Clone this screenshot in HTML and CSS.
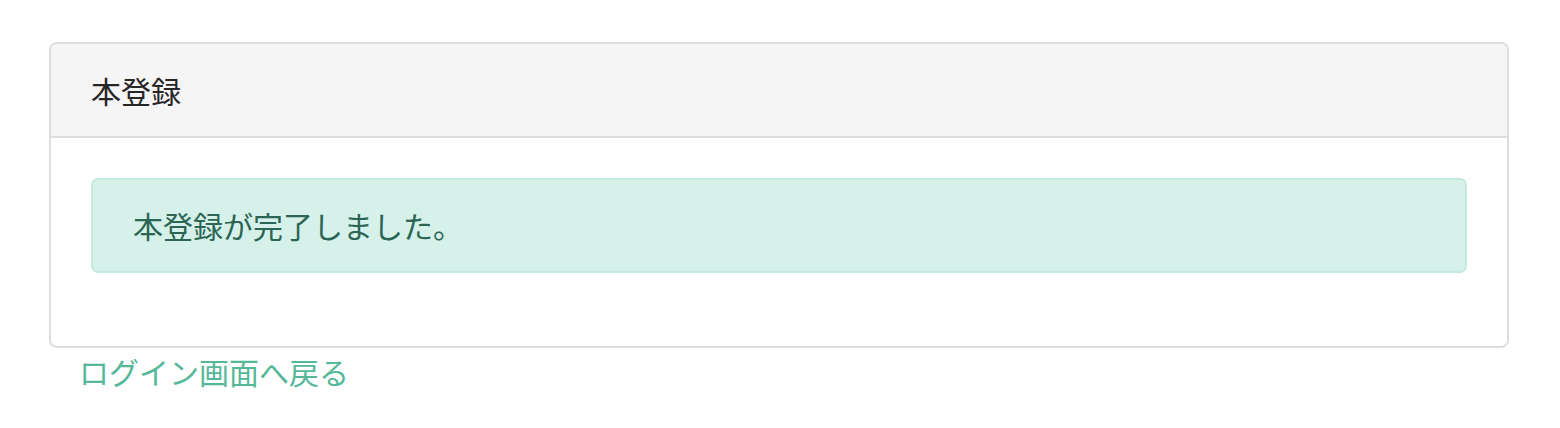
FILE: index.html
```html
<!DOCTYPE html>
<html lang="ja">
<head>
<meta charset="utf-8">
<title>本登録</title>
<link rel="stylesheet" href="styles.css">
</head>
<body>
<div class="page">
  <div class="panel">
    <div class="panel-heading">本登録</div>
    <div class="panel-body">
      <div class="alert">本登録が完了しました。</div>
    </div>
  </div>
  <div class="links">
    <a class="back-link" href="#">ログイン画面へ戻る</a>
  </div>
</div>
</body>
</html>
```

FILE: styles.css
```css
html, body {
  margin: 0;
  padding: 0;
  background: #ffffff;
}
body {
  font-family: "Noto Sans CJK JP", "Noto Sans", sans-serif;
  font-size: 30px;
  color: #333333;
}
.page {
  padding: 42px 51px 0 49px;
}
.panel {
  border: 2px solid #dddddd;
  border-radius: 8px;
  background: #ffffff;
  overflow: hidden;
}
.panel-heading {
  background: #f5f5f5;
  border-bottom: 2px solid #dddddd;
  height: 92px;
  line-height: 92px;
  padding: 0 40px;
  color: #262626;
}
.panel-body {
  padding: 40px 40px 73px;
}
.alert {
  background: #d6f1ea;
  border: 2px solid #c4e9de;
  border-radius: 7px;
  color: #2c6553;
  height: 91px;
  line-height: 91px;
  padding: 0 40px;
}
.links {
  padding-left: 30px;
  line-height: 46px;
}
.back-link {
  color: #55b898;
  text-decoration: none;
}
```
